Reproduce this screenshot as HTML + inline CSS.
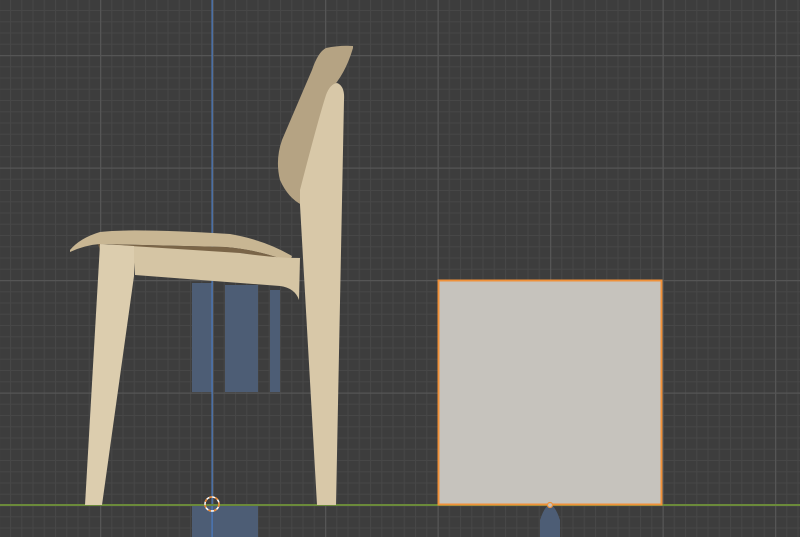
<!DOCTYPE html>
<html><head><style>
html,body{margin:0;padding:0;background:#3d3d3d;overflow:hidden}
svg{display:block}
</style></head><body>
<svg width="800" height="537" viewBox="0 0 800 537" xmlns="http://www.w3.org/2000/svg">
<defs>
<pattern id="minor" x="-12.5" y="-1.25" width="11.25" height="11.25" patternUnits="userSpaceOnUse">
<path d="M0 0.5H11.25M0.5 0V11.25" stroke="#474747" stroke-width="1" fill="none"/>
</pattern>
<pattern id="major" x="100" y="55" width="112.5" height="112.5" patternUnits="userSpaceOnUse">
<path d="M0 0.5H112.5M0.5 0V112.5" stroke="#555555" stroke-width="1.5" fill="none"/>
</pattern>
</defs>
<rect width="800" height="537" fill="#3d3d3d"/>
<rect width="800" height="537" fill="url(#minor)"/>
<rect width="800" height="537" fill="url(#major)"/>
<g fill="#4d5d75">
<rect x="192" y="283" width="20" height="109"/>
<rect x="225" y="285" width="33" height="107"/>
<rect x="270" y="290" width="10" height="102"/>
<rect x="192" y="506" width="66" height="31"/>
<path d="M540 537 V520 Q545 505 550 505 Q555 505 560 520 V537Z"/>
</g>
<rect x="211.5" y="0" width="1.2" height="537" fill="#4a7bc4"/>
<rect x="0" y="504" width="800" height="2" fill="#6b8a3a"/>
<path d="M353 46 Q340 45 326 48 Q318 52 312 70 L282 140 Q275 160 280 180 Q288 198 302 205 L330 90 Q345 75 353 48Z" fill="#b5a383"/>
<path d="M337 83 Q345 86 344 100 L336 505 L317 505 L300 205 L300 190 Q318 120 326 95 Q330 84 337 83Z" fill="#d8c8a8"/>
<path d="M70 250 Q80 238 100 232 Q130 228 230 234 Q265 240 292 256 L290 262 Q260 250 225 247 L100 244 Q85 245 70 252Z" fill="#c8b693"/>
<path d="M98 244 L225 247 Q260 250 290 262 L288 264 Q265 256 240 253 L100 250Z" fill="#7a6548"/>
<path d="M100 244 L240 253 Q275 258 300 258 L299 300 Q295 288 280 286 L135 275 L133 250Z" fill="#d5c5a4"/>
<path d="M100 244 L134 246 L134 276 L102 505 L85 505Z" fill="#dccdae"/>
<rect x="438.5" y="280.5" width="223" height="224" fill="#c6c3bd" stroke="#f0913a" stroke-width="2"/>
<circle cx="550" cy="505" r="2.5" fill="#c6c3bd" stroke="#f0913a" stroke-width="1.2"/>
<circle cx="212" cy="504" r="7" fill="none" stroke="#ffffff" stroke-width="1.5"/>
<circle cx="212" cy="504" r="7" fill="none" stroke="#e8842d" stroke-width="1.5" stroke-dasharray="3 3"/>
</svg>
</body></html>
